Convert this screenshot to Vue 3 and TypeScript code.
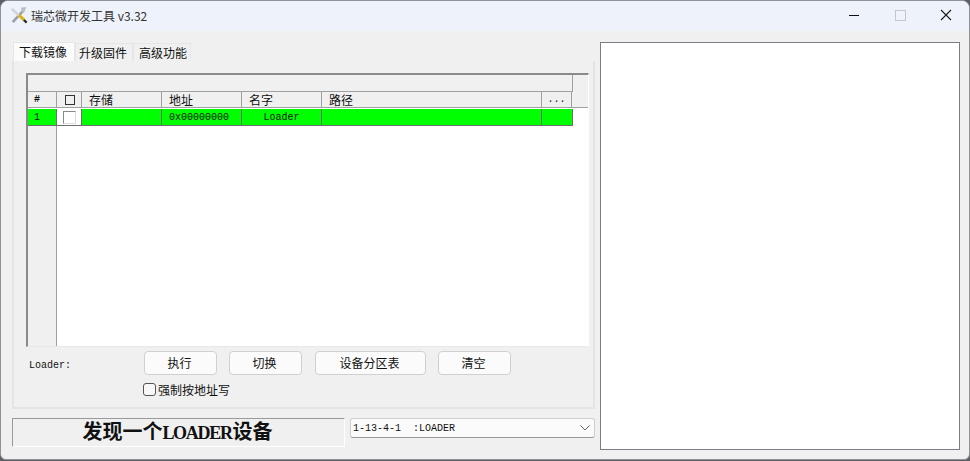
<template>
  <div class="window">
    <div class="titlebar">
      <svg class="app-icon" width="18" height="18" viewBox="0 0 20 20">
        <path d="M3 18 L14 6" stroke="#9aa0a5" stroke-width="3" />
        <path d="M12 2 L18 1 L16 7 L14 8 Z" fill="#b9bec2" />
        <path d="M2 3 L10 11" stroke="#d2d5d8" stroke-width="3" />
        <path d="M10 10 L16 16" stroke="#d9b21f" stroke-width="3.5" />
        <path d="M15.5 15.5 L18.5 18.5" stroke="#2a2a2a" stroke-width="2.5" />
      </svg>
      <span class="title">瑞芯微开发工具 v3.32</span>
      <div class="win-controls">
        <span class="ctl"><i class="min"></i></span>
        <span class="ctl"><i class="max"></i></span>
        <span class="ctl">
          <svg width="12" height="12" viewBox="0 0 12 12"><path d="M1 1 L11 11 M11 1 L1 11" stroke="#1a1a1a" stroke-width="1.1" /></svg>
        </span>
      </div>
    </div>

    <div class="content">
      <div class="left">
        <div class="tabs">
          <div
            v-for="(t, i) in tabs"
            :key="t"
            class="tab"
            :class="{ active: i === 0 }"
          >{{ t }}</div>
        </div>
        <div class="tab-page">
          <div class="list">
            <div class="group-row"><div class="group-cell"></div></div>
            <div class="row head">
              <div
                v-for="c in columns"
                :key="c.key"
                class="cell"
                :class="c.cls"
                :style="{ width: c.width + 'px' }"
              >
                <span v-if="c.key === 'check'" class="head-box"></span>
                <template v-else>{{ c.label }}</template>
              </div>
            </div>
            <div class="row item">
              <div
                v-for="c in rowCells"
                :key="c.key"
                class="cell"
                :class="c.cls"
                :style="{ width: c.width + 'px' }"
              >
                <span v-if="c.key === 'check'" class="row-box"></span>
                <template v-else>{{ c.text }}</template>
              </div>
            </div>
            <div class="list-rest"><div class="rest-gutter"></div></div>
          </div>

          <div class="actions">
            <span class="loader-label">Loader:</span>
            <div class="actions-main">
              <div class="btn-row">
                <button class="btn w73">执行</button>
                <button class="btn w73">切换</button>
                <button class="btn w111">设备分区表</button>
                <button class="btn w73">清空</button>
              </div>
              <label class="force"><span class="force-box"></span>强制按地址写</label>
            </div>
          </div>
        </div>

        <div class="status-row">
          <div class="status">发现一个<span class="latin">LOADER</span>设备</div>
          <div class="combo">
            <span>1-13-4-1&nbsp;&nbsp;:LOADER</span>
            <svg width="10" height="6" viewBox="0 0 10 6"><path d="M0.5 0.5 L5 5 L9.5 0.5" fill="none" stroke="#666" stroke-width="1" /></svg>
          </div>
        </div>
      </div>

      <div class="log"></div>
    </div>
  </div>
</template>

<script setup lang="ts">
const tabs: string[] = ['下载镜像', '升级固件', '高级功能']

const columns = [
  { key: 'num', label: '#', width: 29, cls: 'mono bold num' },
  { key: 'check', label: '', width: 25, cls: 'center' },
  { key: 'store', label: '存储', width: 80, cls: 'pad' },
  { key: 'addr', label: '地址', width: 80, cls: 'pad' },
  { key: 'name', label: '名字', width: 80, cls: 'pad' },
  { key: 'path', label: '路径', width: 220, cls: 'pad' },
  { key: 'more', label: '...', width: 30, cls: 'mono center' }
]

// row cells sit on a grey row background, the gaps are the grid lines
const rowCells = [
  { key: 'num', text: '1', width: 28, cls: 'mono num' },
  { key: 'check', text: '', width: 24, cls: 'check-cell' },
  { key: 'store', text: '', width: 79, cls: '' },
  { key: 'addr', text: '0x00000000', width: 79, cls: 'mono pad' },
  { key: 'name', text: 'Loader', width: 79, cls: 'mono center' },
  { key: 'path', text: '', width: 219, cls: '' },
  { key: 'more', text: '', width: 30, cls: '' }
]
</script>

<style>
html,
body {
  margin: 0;
  background: #5b5f63;
  overflow: hidden;
}
</style>

<style scoped>
.window {
  width: 970px;
  height: 460px;
  box-sizing: border-box;
  background: #f0f0f0;
  border: 1px solid #8f9296;
  border-radius: 8px 8px 6px 6px;
  overflow: hidden;
  font-family: "Noto Sans CJK SC", sans-serif;
  font-size: 12px;
  color: #111;
  display: flex;
  flex-direction: column;
}

.titlebar {
  height: 30px;
  box-sizing: border-box;
  flex: none;
  background: #eef2fa;
  display: flex;
  align-items: center;
  padding: 0 0 2px 9px;
}

.app-icon {
  margin-right: 3px;
}

.title {
  font-size: 12px;
  color: #333;
}

.win-controls {
  margin-left: auto;
  display: flex;
}

.ctl {
  width: 46px;
  height: 28px;
  display: flex;
  align-items: center;
  justify-content: center;
}

.ctl i {
  display: block;
}

.min {
  width: 10px;
  height: 1px;
  background: #111;
}

.max {
  width: 9px;
  height: 9px;
  border: 1px solid #c4c6ca;
}

.content {
  flex: 1;
  display: flex;
  padding: 11px 9px 9px 11px;
  gap: 5px;
}

.left {
  width: 583px;
  display: flex;
  flex-direction: column;
}

.tabs {
  display: flex;
  height: 19px;
  padding-left: 1px;
  align-items: flex-end;
}

.tab {
  height: 18px;
  width: 58px;
  line-height: 18px;
  padding-left: 3px;
  background: #f0f0f0;
  border: 1px solid #e6e6e6;
  border-bottom: none;
  white-space: nowrap;
  box-sizing: border-box;
}

.tab.active {
  height: 19px;
  width: 62px;
  background: #fbfbfb;
  padding-left: 5px;
}

.tab:last-child {
  padding-left: 5px;
}

.tab-page {
  height: 348px;
  box-sizing: border-box;
  border-right: 2px solid #e4e4e4;
  border-bottom: 2px solid #e4e4e4;
  border-left: 2px solid #e4e4e4;
  padding: 12px 4px 0 12px;
}

.list {
  height: 274px;
  box-sizing: border-box;
  border-top: 2px solid #8a8a8a;
  border-left: 2px solid #8a8a8a;
  border-right: 1px solid #ffffff;
  border-bottom: 1px solid #e8e8e8;
  background: #fff;
  display: flex;
  flex-direction: column;
}

.group-row {
  height: 17px;
  background: #f0f0f0;
  flex: none;
}

.group-cell {
  width: 544px;
  height: 16px;
  border-right: 1px solid #a0a0a0;
  border-bottom: 1px solid #a0a0a0;
}

.row {
  display: flex;
  flex: none;
}

.head {
  height: 15px;
  background: #f0f0f0;
  border-bottom: 1px solid #a0a0a0;
}

.head .cell {
  border-right: 1px solid #a0a0a0;
  line-height: 15px;
  height: 15px;
}

.cell {
  flex: none;
  box-sizing: border-box;
  white-space: nowrap;
}

.pad {
  padding-left: 7px;
}

.center {
  text-align: center;
}

.mono {
  font-family: "Liberation Mono", monospace;
  font-size: 10px;
}

.bold {
  font-weight: 700;
}

.num {
  padding-left: 6px;
}

.head-box {
  display: inline-block;
  width: 8px;
  height: 8px;
  border: 1px solid #333;
  vertical-align: 0;
  margin-left: 1px;
}

.item {
  width: 545px;
  height: 17px;
  box-sizing: border-box;
  margin-top: 1px;
  padding: 0 1px 1px 0;
  gap: 1px;
  background: #6e6e6e;
}

.item .cell {
  background: #00ff00;
  line-height: 17px;
  height: 16px;
}

.item .check-cell {
  background: #fff;
  display: flex;
  align-items: center;
  justify-content: center;
}

.row-box {
  width: 13px;
  height: 13px;
  box-sizing: border-box;
  background: #fff;
  border: 1px solid #8a8a8a;
  border-right-color: #ddd;
  border-bottom-color: #ddd;
}

.list-rest {
  flex: 1;
  display: flex;
}

.rest-gutter {
  width: 29px;
  box-sizing: border-box;
  background: #f0f0f0;
  border-right: 1px solid #a0a0a0;
}

.actions {
  display: flex;
  margin-top: 4px;
}

.loader-label {
  font-family: "Liberation Mono", monospace;
  font-size: 10px;
  width: 118px;
  padding: 9px 0 0 3px;
  box-sizing: border-box;
  flex: none;
}

.actions-main {
  display: flex;
  flex-direction: column;
}

.btn-row {
  display: flex;
  gap: 12px;
}

.btn {
  height: 24px;
  box-sizing: border-box;
  background: #fbfbfb;
  border: 1px solid #d0d0d0;
  border-radius: 4px;
  font: inherit;
  color: inherit;
  padding: 0 2px 2px 0;
}

.w73 {
  width: 73px;
}

.w111 {
  width: 111px;
  margin-left: 1px;
}

.force {
  display: flex;
  align-items: center;
  margin-top: 4px;
  margin-left: -1px;
  height: 20px;
}

.force-box {
  width: 13px;
  height: 13px;
  box-sizing: border-box;
  border: 1px solid #555;
  border-radius: 3px;
  background: #f8f8f8;
  margin-right: 2px;
}

.status-row {
  display: flex;
  margin-top: 9px;
  gap: 5px;
}

.status {
  width: 333px;
  height: 29px;
  box-sizing: border-box;
  border-top: 1px solid #9a9a9a;
  border-left: 1px solid #9a9a9a;
  border-right: 1px solid #fff;
  border-bottom: 1px solid #fff;
  text-align: center;
  padding-right: 2px;
  font-family: "Liberation Serif", "Noto Sans CJK SC", serif;
  font-size: 20px;
  font-weight: 700;
  line-height: 27px;
  color: #111;
}

.latin {
  font-size: 18px;
  letter-spacing: -1.3px;
  margin-right: 1px;
}

.combo {
  width: 245px;
  height: 20px;
  box-sizing: border-box;
  background: #fbfbfb;
  border: 1px solid #cfcfcf;
  border-bottom-color: #9a9a9a;
  border-radius: 3px;
  display: flex;
  align-items: center;
  justify-content: space-between;
  padding: 0 4px 0 2px;
  font-family: "Liberation Mono", monospace;
  font-size: 10px;
}

.log {
  width: 360px;
  height: 408px;
  box-sizing: border-box;
  background: #fff;
  border: 1px solid #7a7d85;
}
</style>
